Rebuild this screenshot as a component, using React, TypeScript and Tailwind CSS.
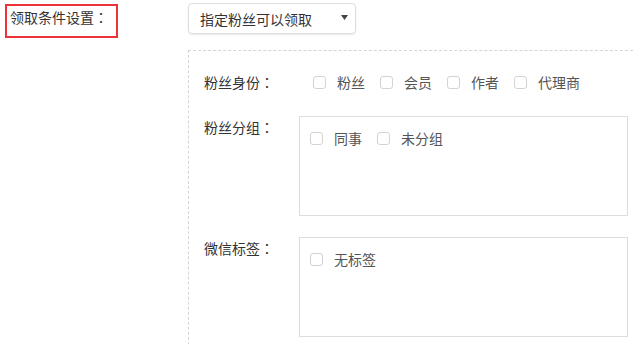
import React from "react";

// full-width colon centred in its cell, as the original font draws it
const Colon = () => <span className="font-['Noto_Sans_CJK_TC',sans-serif]">：</span>;

const Checkbox = ({ label }: { label: string }) => (
  <label className="flex items-center mr-[15px]">
    <span className="inline-block w-[13px] h-[13px] border border-[#d3d3d3] rounded-[3px] bg-white" />
    <span className="ml-[11px] text-[#555]">{label}</span>
  </label>
);

const BoxRow = ({ title, options }: { title: string; options: string[] }) => (
  <div className="flex">
    <div className="w-[95px] pt-[1px] text-[#333]">
      {title}
      <Colon />
    </div>
    <div className="w-[329px] h-[100px] border border-[#ddd] pl-[10px] pt-[11px] flex items-start">
      {options.map((o) => (
        <Checkbox key={o} label={o} />
      ))}
    </div>
  </div>
);

export default function App() {
  return (
    <div className="w-[635px] h-[344px] overflow-hidden bg-white text-[14px] leading-[20px] font-['Noto_Sans_CJK_SC','Noto_Sans',sans-serif]">
      <div className="flex">
        {/* left label, highlighted */}
        <div className="w-[188px] shrink-0 pt-[4px] pl-[5px]">
          <div className="w-[113px] h-[34px] border-2 border-[#ee3338] pl-[3px] pt-[1px] text-[#333]">
            领取条件设置
            <Colon />
          </div>
        </div>

        <div className="flex-1">
          <div className="mt-[3px] w-[168px] h-[31px] border border-[#ddd] rounded-[4px] shadow-[0_1px_2px_rgba(0,0,0,0.08)] flex items-center justify-between pl-[11px] pr-[7px] text-[#333]">
            <span>指定粉丝可以领取</span>
            <svg width="7" height="5" viewBox="0 0 7 5" className="mb-[2px]">
              <path d="M0 0 L7 0 L3.5 5 Z" fill="#444" />
            </svg>
          </div>

          <div className="mt-[16px] w-[460px] h-[300px] border-t border-l border-dashed border-[#d4d4d4] pl-[15px] pt-[21px]">
            <div className="flex items-center h-[20px]">
              <div className="w-[95px] text-[#333]">
                粉丝身份
                <Colon />
              </div>
              <div className="flex items-center pl-[14px]">
                {["粉丝", "会员", "作者", "代理商"].map((o) => (
                  <Checkbox key={o} label={o} />
                ))}
              </div>
            </div>

            <div className="mt-[24px]">
              <BoxRow title="粉丝分组" options={["同事", "未分组"]} />
            </div>
            <div className="mt-[21px]">
              <BoxRow title="微信标签" options={["无标签"]} />
            </div>
          </div>
        </div>
      </div>
    </div>
  );
}
